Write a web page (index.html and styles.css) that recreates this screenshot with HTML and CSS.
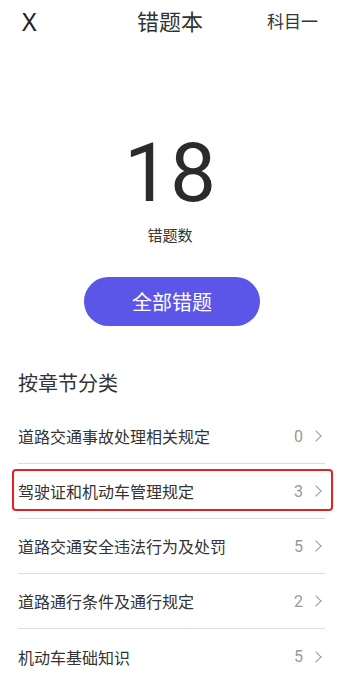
FILE: index.html
```html
<!DOCTYPE html>
<html lang="zh-CN">
<head>
  <meta charset="UTF-8">
  <meta name="viewport" content="width=device-width, initial-scale=1.0">
  <title>错题本</title>
  <link rel="stylesheet" href="styles.css">
</head>
<body>
  <header class="topbar">
    <div class="close">X</div>
    <div class="title">错题本</div>
    <div class="subject">科目一</div>
  </header>

  <section class="summary">
    <div class="count">18</div>
    <div class="count-label">错题数</div>
    <button class="all-btn">全部错题</button>
  </section>

  <section class="chapters">
    <h2>按章节分类</h2>
    <ul class="chapter-list">
      <li class="chapter"><span class="name">道路交通事故处理相关规定</span><span class="num">0</span><span class="arrow"></span></li>
      <li class="chapter marked"><span class="name">驾驶证和机动车管理规定</span><span class="num">3</span><span class="arrow"></span></li>
      <li class="chapter"><span class="name">道路交通安全违法行为及处罚</span><span class="num">5</span><span class="arrow"></span></li>
      <li class="chapter"><span class="name">道路通行条件及通行规定</span><span class="num">2</span><span class="arrow"></span></li>
      <li class="chapter"><span class="name">机动车基础知识</span><span class="num">5</span><span class="arrow"></span></li>
    </ul>
  </section>
</body>
</html>
```

FILE: styles.css
```css
* {
  box-sizing: border-box;
}
body {
  margin: 0;
  background: #fff;
  color: #333;
  font-family: Roboto, "Noto Sans CJK SC", sans-serif;
}
.topbar {
  height: 40px;
  display: grid;
  grid-template-columns: 1fr auto 1fr;
  align-items: center;
  padding: 0 22px;
}
.close {
  font-family: "Noto Sans", sans-serif;
  font-size: 25px;
  line-height: 25px;
  margin-top: 3px;
  color: #222;
}
.title {
  font-size: 22px;
  color: #333;
}
.subject {
  justify-self: end;
  font-size: 17px;
  color: #333;
}
.summary {
  display: flex;
  flex-direction: column;
  align-items: center;
}
.count {
  margin-top: 92px;
  font-size: 82px;
  font-weight: 400;
  line-height: 82px;
  color: #2b2b2b;
}
.count-label {
  margin-top: 12px;
  font-size: 15px;
  line-height: 20px;
  color: #333;
}
.all-btn {
  margin-top: 31px;
  margin-left: 4px;
  width: 176px;
  height: 49px;
  border: none;
  border-radius: 25px;
  background: #5c56e8;
  color: #fff;
  font-family: "Noto Sans CJK SC", sans-serif;
  font-size: 20px;
}
.chapters {
  padding: 0 15px 0 18px;
}
.chapters h2 {
  margin: 46px 0 0;
  font-size: 20px;
  font-weight: normal;
  line-height: 24px;
  color: #333;
}
.chapter-list {
  list-style: none;
  margin: 13px 0 0;
  padding: 0;
}
.chapter {
  position: relative;
  height: 55px;
  display: flex;
  align-items: center;
  border-bottom: 1px solid #ddd;
  font-size: 16px;
}
.chapter:last-child {
  border-bottom: none;
}
.chapter .name {
  flex: 1;
}
.chapter .num {
  color: #999;
  margin-right: 9px;
}
.arrow {
  width: 8px;
  height: 8px;
  border-top: 1.4px solid #999;
  border-right: 1.4px solid #999;
  transform: rotate(45deg);
  margin-right: 5px;
}
.marked::after {
  content: "";
  position: absolute;
  top: 5px;
  bottom: 7px;
  left: -6px;
  right: -8px;
  border: 2px solid #e52222;
  border-radius: 4px;
}
```
